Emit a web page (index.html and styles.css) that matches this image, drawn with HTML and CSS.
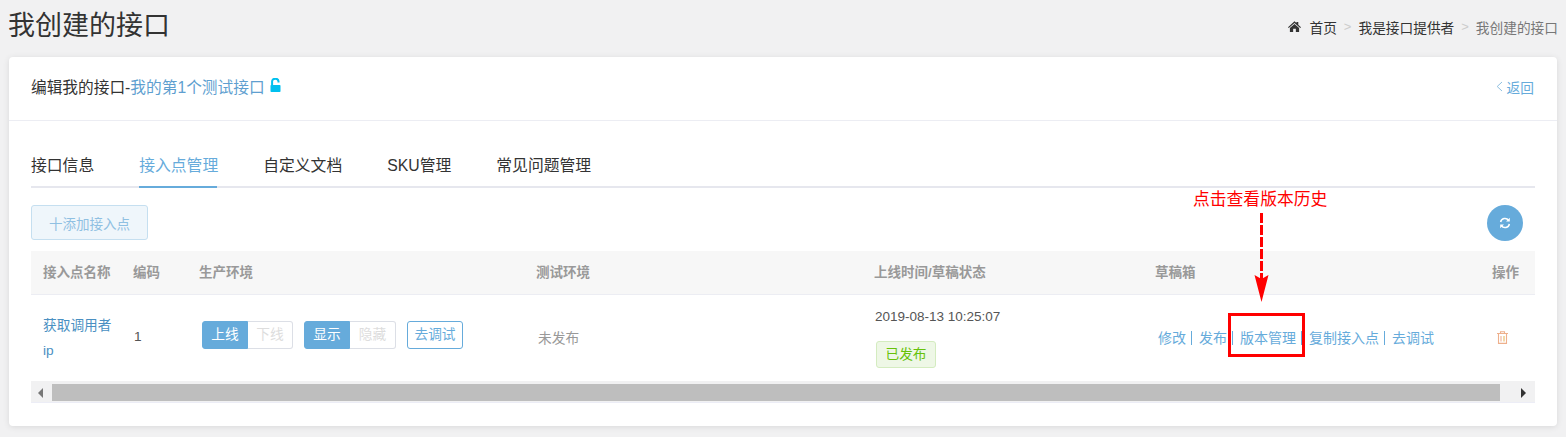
FILE: index.html
```html
<!DOCTYPE html>
<html lang="zh-CN">
  <head>
    <meta charset="UTF-8" />
    <title>我创建的接口</title>
    <link rel="stylesheet" href="styles.css">
  </head>
  <body>
    <div class="page-head">
      <h1>我创建的接口</h1>
      <div class="crumbs">
        <svg class="home-icon" viewBox="0 0 24 20"><path d="M12 0.5 L15.5 3.6 V1.5 H19 V6.7 L24 11.2 L22.6 12.8 L12 3.4 L1.4 12.8 L0 11.2 Z M12 5.4 L20.5 12.9 V20 H14.5 V14 H9.5 V20 H3.5 V12.9 Z" fill="#333"/></svg>
        <a class="crumb">首页</a><span class="sep">&gt;</span>
        <a class="crumb">我是接口提供者</a><span class="sep">&gt;</span>
        <span class="crumb-now">我创建的接口</span>
      </div>
    </div>

    <div class="card">
      <div class="card-head">
        <div class="card-title">
          <span>编辑我的接口-</span><span class="link">我的第1个测试接口</span>
          <svg class="lock-icon" viewBox="0 0 10 14"><path d="M1.6 7.5 V3.6 A3.2 2.8 0 0 1 8 3.4 V4.6" fill="none" stroke="#00c0ef" stroke-width="2"/><rect x="0" y="7" width="10" height="7" rx="0.8" fill="#00c0ef"/></svg>
        </div>
        <a class="back"><svg class="back-icon" viewBox="0 0 7 11"><path d="M6 1 L1.2 5.5 L6 10" fill="none" stroke="#8fbfe0" stroke-width="1"/></svg>返回</a>
      </div>

      <div class="card-body">
        <ul class="tabs">
          <li>接口信息</li>
          <li class="active">接入点管理</li>
          <li>自定义文档</li>
          <li>SKU管理</li>
          <li>常见问题管理</li>
        </ul>

        <div class="toolbar">
          <button class="add-btn">十添加接入点</button>
          <button class="refresh-btn">
            <svg viewBox="0 0 12 12" width="12" height="12"><path d="M1.6 5 A4.5 4.5 0 0 1 9.6 3.2 M10.4 7 A4.5 4.5 0 0 1 2.4 8.8" fill="none" stroke="#fff" stroke-width="1.5"/><path d="M10.8 0.8 V4.6 H7 Z M1.2 11.2 V7.4 H5 Z" fill="#fff"/></svg>
          </button>
        </div>

        <table class="points">
          <colgroup>
            <col class="c-name"><col class="c-code"><col class="c-prod"><col class="c-test"><col class="c-time"><col class="c-draft"><col class="c-op">
          </colgroup>
          <thead>
            <tr>
              <th>接入点名称</th><th>编码</th><th>生产环境</th><th>测试环境</th><th>上线时间/草稿状态</th><th>草稿箱</th><th>操作</th>
            </tr>
          </thead>
          <tbody>
            <tr>
              <td class="name">获取调用者<br>ip</td>
              <td class="code">1</td>
              <td>
                <div class="env-btns">
                  <div class="switch"><span class="on">上线</span><span class="off">下线</span></div>
                  <div class="switch"><span class="on">显示</span><span class="off">隐藏</span></div>
                  <a class="debug-btn">去调试</a>
                </div>
              </td>
              <td class="muted">未发布</td>
              <td class="time">
                <div>2019-08-13 10:25:07</div>
                <span class="tag">已发布</span>
              </td>
              <td class="drafts">
                <a>修改</a><a>发布</a><a>版本管理</a><a>复制接入点</a><a>去调试</a>
              </td>
              <td class="op">
                <svg class="trash" viewBox="0 0 11 13"><path d="M0 2.5 H11 M3.5 2.5 V0.7 H7.5 V2.5 M1.5 2.5 V12.4 H9.5 V2.5" fill="none" stroke="#eeb08c" stroke-width="1.1"/><path d="M4 5 V10.5" stroke="#f0b8a0" stroke-width="1.2"/><path d="M7 5 V10.5" stroke="#e8c070" stroke-width="1.2"/></svg>
              </td>
            </tr>
          </tbody>
        </table>

        <div class="scrollbar">
          <span class="arrow-left"></span>
          <div class="thumb"></div>
          <span class="arrow-right"></span>
        </div>
      </div>
    </div>

    <!-- screenshot annotation -->
    <div class="note-text">点击查看版本历史</div>
    <svg class="note-arrow" viewBox="0 0 16 90" width="16" height="90"><path d="M7.5 0 V66" stroke="#f00" stroke-width="3" stroke-dasharray="10 2" fill="none"/><path d="M0.5 62 L7.5 66 L14.5 62 L7.5 89 Z" fill="#f00"/></svg>
    <div class="note-box"></div>
  </body>
</html>
```

FILE: styles.css
```css
* {
  box-sizing: border-box;
}

html,
body {
  height: 437px;
  overflow: hidden;
}

body {
  margin: 0;
  padding: 0 9px;
  background: #f1f1f2;
  font-family: "Liberation Sans", "Noto Sans CJK SC", sans-serif;
  font-size: 14px;
  color: #333;
}

a {
  color: #66abdb;
}

.page-head {
  display: flex;
  justify-content: space-between;
  align-items: center;
  height: 57px;
  padding-bottom: 5px;
}

h1 {
  margin: 0 0 0 -1px;
  font-size: 27px;
  font-weight: 400;
  line-height: 40px;
  color: #333;
}

.crumbs {
  display: flex;
  align-items: center;
  font-size: 13.7px;
  margin-right: -1px;
  margin-top: 1px;
}

.home-icon {
  width: 13px;
  height: 11px;
  margin-right: 8px;
}

.crumbs .crumb {
  color: #333;
}

.sep {
  margin: 0 7px;
  color: #ccc;
  font-size: 13px;
}

.crumb-now {
  color: #777;
}

.card {
  height: 369px;
  background: #fff;
  border-radius: 4px;
  box-shadow: 0 1px 6px rgba(0, 0, 0, 0.1);
}

.card-head {
  display: flex;
  justify-content: space-between;
  align-items: center;
  height: 64px;
  padding: 0 23px 4px 22px;
  border-bottom: 1px solid #ecedf3;
}

.card-title {
  display: flex;
  align-items: center;
  font-size: 15.7px;
}

.link {
  color: #5f9fd0;
}

.lock-icon {
  width: 11px;
  height: 14px;
  margin: -3px 0 0 5px;
}

.back {
  display: flex;
  align-items: center;
  font-size: 13.7px;
}

.back-icon {
  width: 7px;
  height: 11px;
  margin-right: 4px;
}

.card-body {
  padding: 0 22px;
}

.tabs {
  display: flex;
  gap: 45px;
  height: 67px;
  margin: 0;
  padding: 0;
  list-style: none;
  border-bottom: 2px solid #e6e7ee;
  font-size: 15.8px;
}

.tabs li {
  height: 67px;
  padding-top: 35px;
  line-height: 20px;
  white-space: nowrap;
}

.tabs li.active {
  width: 78px;
  margin-right: 1px;
  color: #66abdb;
  border-bottom: 2px solid #66abdb;
}

.toolbar {
  display: flex;
  justify-content: space-between;
  align-items: center;
  height: 35px;
  margin-top: 17px;
  padding-right: 12px;
}

.add-btn {
  width: 117px;
  height: 35px;
  padding: 0;
  border: 1px solid #c5dff0;
  border-radius: 3px;
  background: #eff6fb;
  color: #8fc0e2;
  font: inherit;
  font-size: 13.5px;
}

.refresh-btn {
  display: flex;
  align-items: center;
  justify-content: center;
  width: 36px;
  height: 36px;
  padding: 0;
  border: none;
  border-radius: 50%;
  background: #66abdb;
}

.points {
  width: 100%;
  margin-top: 11px;
  border-collapse: collapse;
  table-layout: fixed;
}

.c-name { width: 102px; }
.c-code { width: 66px; }
.c-prod { width: 337px; }
.c-test { width: 338px; }
.c-time { width: 281px; }
.c-draft { width: 337px; }

.points th {
  height: 43px;
  padding: 0 0 2px 0;
  background: #f7f7f7;
  border-bottom: 1px solid #ecedf3;
  color: #999;
  font-size: 13.5px;
  font-weight: 700;
  text-align: left;
}

.points th:first-child {
  padding-left: 12px;
}

.points td {
  height: 87px;
  padding: 0;
  font-size: 13.7px;
}

.name {
  padding: 0 0 0 12px !important;
  line-height: 25px;
  color: #4a90c2;
}

.code {
  padding: 0 0 2px 1px !important;
  color: #555;
}

.env-btns {
  display: flex;
  align-items: center;
  gap: 11px;
  margin: 0 0 6px 3px;
}

.switch {
  display: flex;
  height: 28px;
  line-height: 26px;
}

.switch span {
  display: block;
  width: 46px;
  text-align: center;
}

.switch .on {
  background: #66abdb;
  border: 1px solid #66abdb;
  border-radius: 3px 0 0 3px;
  color: #fff;
}

.switch .off {
  width: 45px;
  border: 1px solid #dcdfe6;
  border-left: none;
  border-radius: 0 3px 3px 0;
  color: #ddd;
}

.switch + .switch .off {
  width: 46px;
}

.debug-btn {
  width: 56px;
  height: 28px;
  line-height: 26px;
  border: 1px solid #66abdb;
  border-radius: 3px;
  text-align: center;
}

.muted {
  padding: 0 0 2px 2px !important;
  color: #999;
}

.time {
  color: #555;
  font-size: 13.5px !important;
  padding: 1px 0 0 1px !important;
}

.tag {
  display: inline-block;
  width: 60px;
  height: 27px;
  margin: 17px 0 0 1px;
  line-height: 25px;
  text-align: center;
  background: #eef7e6;
  border: 1px solid #d4ecc0;
  border-radius: 3px;
  color: #67c20a;
  font-size: 13.7px;
}

.drafts {
  padding-left: 3px !important;
  color: #66abdb;
  font-size: 14px !important;
  white-space: nowrap;
}

.drafts a {
  display: inline-block;
  line-height: 14px;
  padding-right: 5px;
  margin-right: 7px;
  border-right: 1px solid #66abdb;
}

.drafts a:last-child {
  border-right: none;
  margin-right: 0;
}

.trash {
  display: block;
  width: 11px;
  height: 13px;
  margin-left: 5px;
}

.scrollbar {
  display: flex;
  align-items: center;
  height: 22px;
  padding-top: 2px;
  background: #f1f1f2;
  border-bottom: 1px solid #ecedf6;
}

.thumb {
  flex: 1;
  height: 17px;
  background: #bebebe;
}

.arrow-left,
.arrow-right {
  display: block;
  width: 0;
  height: 0;
  border-top: 5px solid transparent;
  border-bottom: 5px solid transparent;
}

.arrow-left {
  margin: 0 9px 0 7px;
  border-right: 5px solid #777;
}

.arrow-right {
  margin: 0 9px 0 21px;
  border-left: 5px solid #333;
}

.note-text {
  position: absolute;
  left: 1193px;
  top: 189px;
  color: #f00;
  font-size: 16.8px;
  line-height: 22px;
}

.note-arrow {
  position: absolute;
  left: 1254px;
  top: 213px;
}

.note-box {
  position: absolute;
  left: 1228px;
  top: 313px;
  width: 77px;
  height: 44px;
  border: 3px solid #f00;
}
```
